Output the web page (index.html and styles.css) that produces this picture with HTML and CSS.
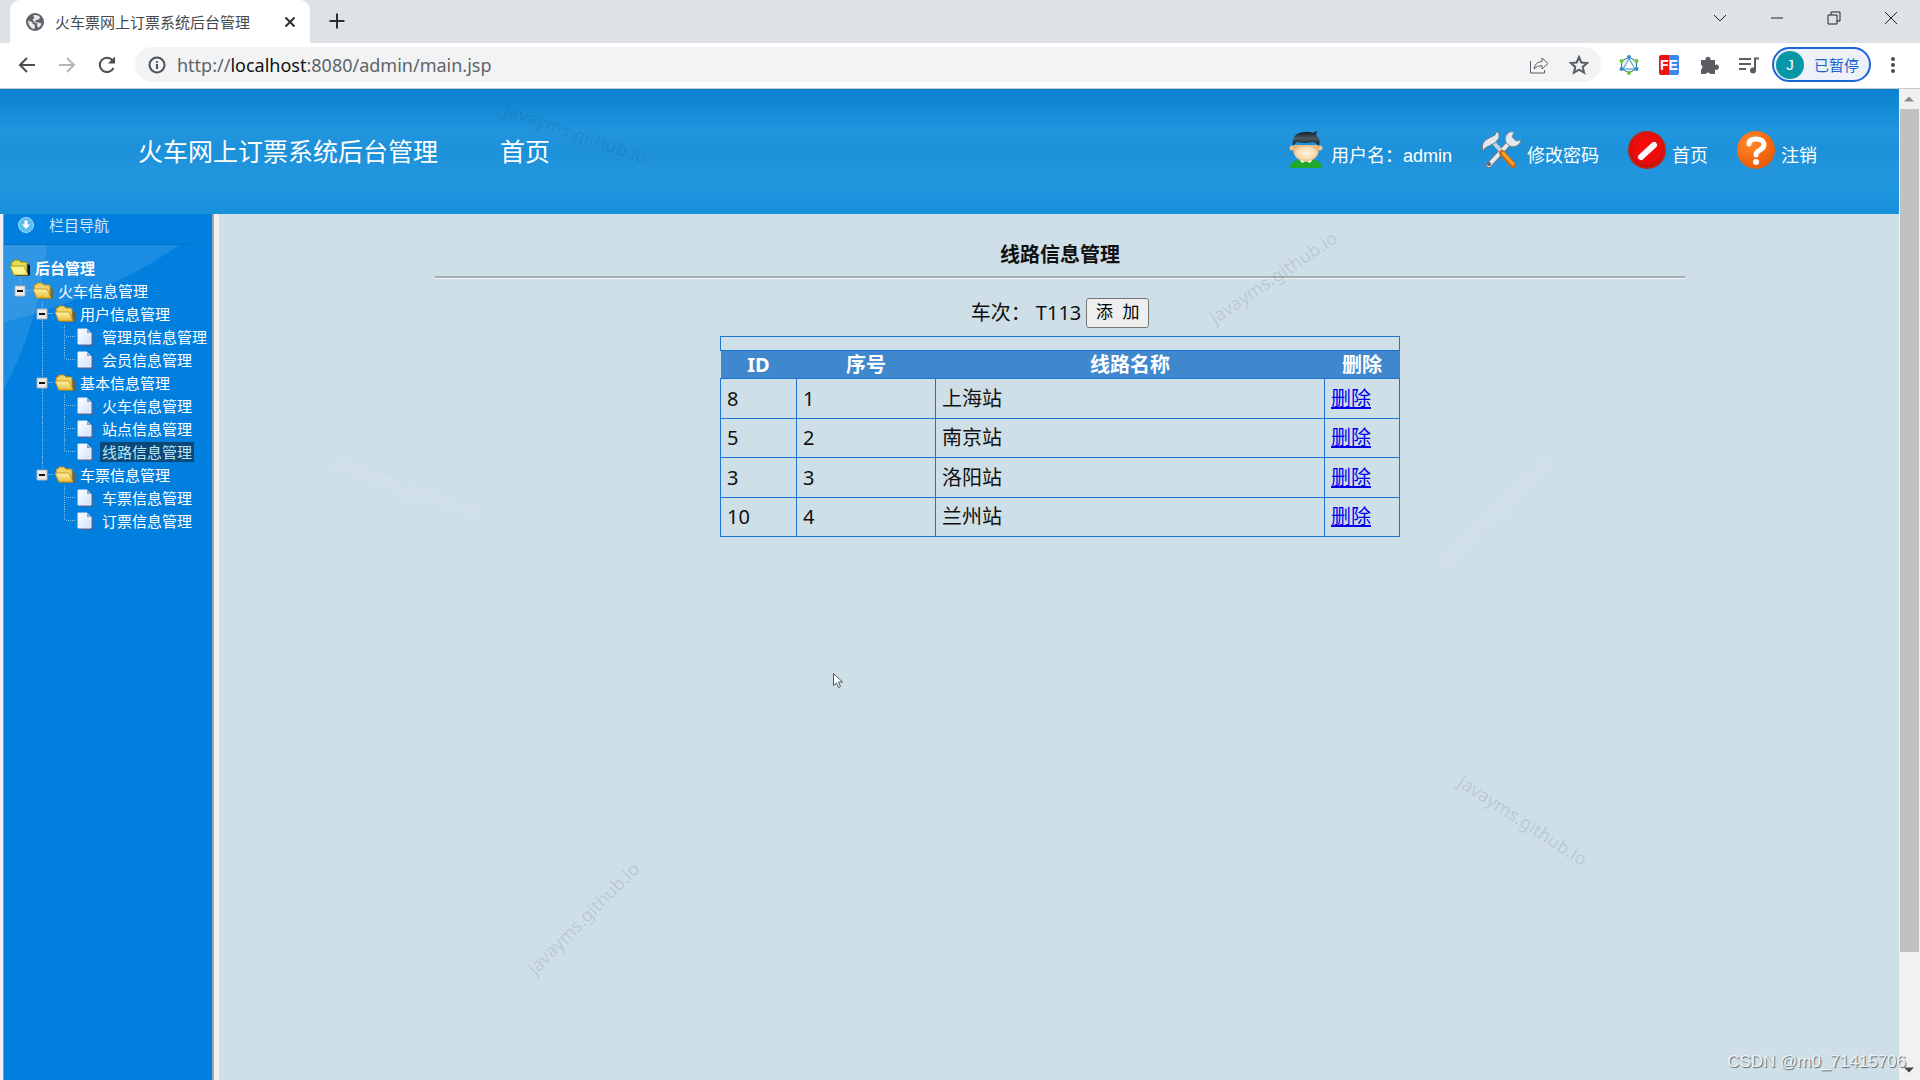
FILE: index.html
```html
<!DOCTYPE html>
<html lang="zh-CN">
<head>
<meta charset="utf-8">
<title>火车票网上订票系统后台管理</title>
<link rel="stylesheet" href="styles.css">
</head>
<body>
<svg class="defs" aria-hidden="true">
  <defs>
    <linearGradient id="gFold" x1="0" y1="0" x2="0" y2="1"><stop offset="0" stop-color="#fff6a8"/><stop offset="1" stop-color="#e9b93a"/></linearGradient>
    <linearGradient id="gDoc" x1="0" y1="0" x2="1" y2="1"><stop offset="0" stop-color="#fff"/><stop offset="1" stop-color="#cfe0ff"/></linearGradient>
    <radialGradient id="gRed" cx=".5" cy=".45" r=".6"><stop offset="0" stop-color="#ff0a0a"/><stop offset=".7" stop-color="#ea0c0c"/><stop offset="1" stop-color="#b01010"/></radialGradient>
    <radialGradient id="gOrange" cx=".35" cy=".3" r=".8"><stop offset="0" stop-color="#ff8a2e"/><stop offset=".7" stop-color="#f2640c"/><stop offset="1" stop-color="#d95a10"/></radialGradient>
    <linearGradient id="gSteel" x1="0" y1="0" x2="1" y2="0"><stop offset="0" stop-color="#fff"/><stop offset="1" stop-color="#8d9aa5"/></linearGradient>
    <linearGradient id="gHair" x1="0" y1="0" x2="0" y2="1"><stop offset="0" stop-color="#10181c"/><stop offset=".5" stop-color="#4a5a62"/><stop offset="1" stop-color="#10181c"/></linearGradient>
    <radialGradient id="gFace"><stop offset="0" stop-color="#fff1de"/><stop offset=".7" stop-color="#fbdcb4"/><stop offset="1" stop-color="#e9b67c"/></radialGradient>
    <symbol id="folder" viewBox="0 0 20 18">
      <path d="M17 6l3 1v9l-2 1H5z" fill="#8a5a10" opacity=".7"/>
      <path d="M1 4q0-1 1-1h1l1-2h5l2 2h5q1 0 1 1v11H3z" fill="#f3d468" stroke="#b98a22" stroke-width="1"/>
      <path d="M0 7h14l4 9H4z" fill="url(#gFold)" stroke="#c99a2a" stroke-width="1"/>
    </symbol>
    <symbol id="folder-root" viewBox="0 0 20 18">
      <path d="M17 5l3 1v10l-2 1H5z" fill="#111"/>
      <path d="M1 4q0-1 1-1h1l1-2h5l2 2h5q1 0 1 1v11H3z" fill="#e6dc50" stroke="#8a8420" stroke-width="1"/>
      <path d="M0 7h14l4 9H4z" fill="#f8f48c" stroke="#a8a030" stroke-width="1"/>
    </symbol>
    <symbol id="doc" viewBox="0 0 20 18">
      <path d="M3 2h9l4 4v12H3z" fill="#5a5f8a" opacity=".75"/>
      <path d="M1 1h9l4 4v11H1z" fill="url(#gDoc)" stroke="#e8eefc" stroke-width="1"/>
      <path d="M10 1l4 4h-4z" fill="#8f9cc8"/>
    </symbol>
    <symbol id="v-line" viewBox="0 0 22 23"><path class="dots" d="M11.500 0v23"/></symbol>
    <symbol id="box-root" viewBox="0 0 22 23"><path class="dots" d="M11.500 0v6M17 11.500h7"/><path d="M6 7h10v10H6z" fill="#ecebe8" stroke="#a9b3bd"/><path d="M8 12h6" stroke="#111" stroke-width="2"/></symbol>
    <symbol id="box-mid" viewBox="0 0 22 23"><path class="dots" d="M11.500 0v23M17 11.500h7"/><path d="M6 7h10v10H6z" fill="#ecebe8" stroke="#a9b3bd"/><path d="M8 12h6" stroke="#111" stroke-width="2"/></symbol>
    <symbol id="leaf-mid" viewBox="0 0 22 23"><path class="dots" d="M11.500 0v23M13 11.500h11"/></symbol>
    <symbol id="leaf-end" viewBox="0 0 22 23"><path class="dots" d="M11.500 0v12M13 11.500h11"/></symbol>
  </defs>
</svg>

<div class="tabstrip">
  <div class="tab">
    <svg class="favicon" viewBox="0 0 18 18"><circle cx="9" cy="9" r="9" fill="#5f6368"/><path d="M2 7.500l4 1.500 1 2 2 1-.5 4.200Q2.500 15 2 7.500zM7 2.500q4-1.500 7 1.500l-1 2.500-3 .5-1 2 3 .5 3.500 1q-.8 3-3 4.500l-1.500-2.500.5-2-3-1-2-3 2-1.500z" fill="#e8eaed"/></svg>
    <span class="tab-title">火车票网上订票系统后台管理</span>
    <button class="tab-close" aria-label="关闭标签页"><svg viewBox="0 0 12 12"><path d="M1.500 1.500l9 9M10.500 1.500l-9 9"/></svg></button>
  </div>
  <button class="newtab" aria-label="新标签页"><svg viewBox="0 0 16 16"><path d="M8 .5v15M.5 8h15"/></svg></button>
  <div class="winctl">
    <button aria-label="搜索标签页"><svg viewBox="0 0 16 16"><path d="M2 5l6 6 6-6"/></svg></button>
    <button aria-label="最小化"><svg viewBox="0 0 16 16"><path d="M2 8h12"/></svg></button>
    <button aria-label="还原"><svg viewBox="0 0 16 16"><path d="M2 5h9v9H2zM5 5V2h9v9h-3"/></svg></button>
    <button aria-label="关闭"><svg viewBox="0 0 16 16"><path d="M2 2l12 12M14 2L2 14"/></svg></button>
  </div>
</div>

<div class="toolbar">
  <div class="navbtns">
    <button aria-label="后退"><svg viewBox="0 0 20 20"><path d="M18 10H3M10 3l-7 7 7 7"/></svg></button>
    <button class="off" aria-label="前进"><svg viewBox="0 0 20 20"><path d="M2 10h15M10 3l7 7-7 7"/></svg></button>
    <button aria-label="刷新"><svg viewBox="0 0 20 20"><path d="M16.500 13A7.200 7.200 0 1 1 15.500 5.200"/><path d="M18 1.500v7h-7z" fill="#4a4d51" stroke="none"/></svg></button>
  </div>
  <div class="omnibox">
    <svg class="info" viewBox="0 0 18 18"><circle cx="9" cy="9" r="7.500"/><path d="M9 8v5M9 5v1.800"/></svg>
    <div class="url" role="textbox" aria-label="地址">http://<b>localhost</b>:8080/admin/main.jsp</div>
    <button aria-label="分享"><svg viewBox="0 0 20 20"><path d="M1.500 6v12h14v-3"/><path d="M5 14q1-7 8-7.500V3l6 5.500-6 5.500v-3.500q-5 0-8 3.500z"/></svg></button>
    <button class="star" aria-label="收藏"><svg viewBox="0 0 20 20"><path d="M10 2l2.300 5.500 5.900.5-4.500 3.900 1.400 5.800L10 14.600l-5.100 3.100 1.400-5.800L1.800 8l5.900-.5z"/></svg></button>
  </div>
  <div class="exts">
    <button aria-label="扩展程序 GraphQL"><svg viewBox="0 0 20 20"><path d="M10 2l7.500 4.200v7.600L10 18l-7.500-4.200V6.200z" fill="#e8f2fa" stroke="#3f6a80"/><path d="M10 4l6 10H4z" fill="#fff" stroke="#3b8fd0"/><g fill="#6ec52e" stroke="none"><circle cx="2.500" cy="6" r="2"/><circle cx="17.500" cy="6" r="2"/><circle cx="10" cy="18" r="2"/></g><g fill="#2f8fd0" stroke="none"><circle cx="10" cy="2" r="2"/><circle cx="2.500" cy="14" r="2"/><circle cx="17.500" cy="14" r="2"/></g></svg></button>
    <button class="fe" aria-label="扩展程序 FE"><span>FE</span></button>
    <button aria-label="扩展程序"><svg viewBox="0 0 20 20"><path d="M2 5h4.500a2.600 2.600 0 1 1 5 0H16v5a2.600 2.600 0 1 1 0 4.500V19h-4.700a2.500 2.500 0 0 0-4.600 0H2v-4.700a2.500 2.500 0 0 0 0-4.600z" fill="#5a5d61" stroke="none"/></svg></button>
    <button aria-label="媒体控制"><svg viewBox="0 0 20 20"><path d="M0 4h12M0 9h12M0 14h7M16 15V3.500h4" stroke-width="2"/><circle cx="14" cy="15.500" r="3" fill="#5a5d61" stroke="none"/></svg></button>
  </div>
  <button class="profile"><span class="avatar">J</span><span>已暂停</span></button>
  <button class="more" aria-label="菜单"><svg viewBox="0 0 4 18"><circle cx="2" cy="3" r="2"/><circle cx="2" cy="9" r="2"/><circle cx="2" cy="15" r="2"/></svg></button>
</div>

<div class="viewport">
  <div class="page">
    <header class="banner">
      <h1>火车网上订票系统后台管理</h1>
      <a class="home" href="#">首页</a>
      <nav class="quick">
        <span class="user"><svg viewBox="0 0 34 38"><path d="M1 37q0-7 8-8h16q8 1 8 8z" fill="#22a82c"/><path d="M10 28h14l-3 4-4-2-4 2z" fill="#fff"/><path d="M12 27h10l-5 4z" fill="#eeb983"/><circle cx="3" cy="17" r="2.500" fill="#f0c492"/><circle cx="31" cy="17" r="2.500" fill="#f0c492"/><path d="M4 14h26q1 16-13 16T4 14z" fill="url(#gFace)"/><path d="M4 15Q2 2 15 1q5-1 9 1l4-2-1 4q5 4 3 11-2-3-6-4-8 2-16 0-2 1-4 4z" fill="url(#gHair)"/></svg>用户名：admin</span>
        <a class="pwd" href="#"><svg viewBox="0 0 40 38"><path d="M8 34L28 12" stroke="#6d7780" stroke-width="6" stroke-linecap="round"/><path d="M8 34L28 12" stroke="#e6ebee" stroke-width="4" stroke-linecap="round"/><path d="M27 2q-5 5-1 11 7 6 13-1l1-3-5 1-4-4 2-5q-4-1-6 1z" fill="#e3e8ec" stroke="#7f8b95"/><path d="M12 11l10 11" stroke="#c9d1d8" stroke-width="4"/><path d="M21 22l11 12" stroke="#c96a10" stroke-width="6" stroke-linecap="round"/><path d="M22 22l10 11" stroke="#ffa02a" stroke-width="3" stroke-linecap="round"/><path d="M2 20q-3-9 6-13l6-3 1-3 3 1v5l-4 5-6 3q-4 1-6 5z" fill="#e3e8ec" stroke="#6d7780"/><circle cx="8" cy="33" r="2" fill="#5b6570"/></svg>修改密码</a>
        <a class="index" href="#"><svg viewBox="0 0 38 38"><circle cx="19" cy="19" r="19" fill="#c8200c"/><circle cx="19" cy="19" r="17" fill="url(#gRed)"/><path d="M13 26L26 14" stroke="#fff" stroke-width="6" stroke-linecap="round"/></svg>首页</a>
        <a class="logout" href="#"><svg viewBox="0 0 38 38"><circle cx="19" cy="19" r="19" fill="url(#gOrange)"/><path d="M12 13q0-5 7-5t8 5q0 4-4 6-4 2-4 5" fill="none" stroke="#fff" stroke-width="5" stroke-linecap="round"/><circle cx="19" cy="31" r="3" fill="#fff"/></svg>注销</a>
      </nav>
    </header>

    <div class="frames">
      <aside class="side">
        <h2><svg viewBox="0 0 16 16"><circle cx="8" cy="8" r="7.500" fill="#5dbcf0" stroke="#9fdcff"/><path d="M6.500 3.500h3v4h2.500l-4 4.500-4-4.500h2.500z" fill="#fff"/></svg>栏目导航</h2>
        <ul class="tree">
          <li class="root"><svg class="ico"><use href="#folder-root"/></svg><a href="#">后台管理</a></li>
          <li><svg class="ln"><use href="#box-root"/></svg><svg class="ico"><use href="#folder"/></svg><a href="#">火车信息管理</a></li>
          <li><i></i><svg class="ln"><use href="#box-mid"/></svg><svg class="ico"><use href="#folder"/></svg><a href="#">用户信息管理</a></li>
          <li><i></i><svg class="ln"><use href="#v-line"/></svg><svg class="ln"><use href="#leaf-mid"/></svg><svg class="ico"><use href="#doc"/></svg><a href="#">管理员信息管理</a></li>
          <li><i></i><svg class="ln"><use href="#v-line"/></svg><svg class="ln"><use href="#leaf-end"/></svg><svg class="ico"><use href="#doc"/></svg><a href="#">会员信息管理</a></li>
          <li><i></i><svg class="ln"><use href="#box-mid"/></svg><svg class="ico"><use href="#folder"/></svg><a href="#">基本信息管理</a></li>
          <li><i></i><svg class="ln"><use href="#v-line"/></svg><svg class="ln"><use href="#leaf-mid"/></svg><svg class="ico"><use href="#doc"/></svg><a href="#">火车信息管理</a></li>
          <li><i></i><svg class="ln"><use href="#v-line"/></svg><svg class="ln"><use href="#leaf-mid"/></svg><svg class="ico"><use href="#doc"/></svg><a href="#">站点信息管理</a></li>
          <li><i></i><svg class="ln"><use href="#v-line"/></svg><svg class="ln"><use href="#leaf-end"/></svg><svg class="ico"><use href="#doc"/></svg><a class="on" href="#">线路信息管理</a></li>
          <li><i></i><svg class="ln"><use href="#box-root"/></svg><svg class="ico"><use href="#folder"/></svg><a href="#">车票信息管理</a></li>
          <li><i></i><i></i><svg class="ln"><use href="#leaf-mid"/></svg><svg class="ico"><use href="#doc"/></svg><a href="#">车票信息管理</a></li>
          <li><i></i><i></i><svg class="ln"><use href="#leaf-end"/></svg><svg class="ico"><use href="#doc"/></svg><a href="#">订票信息管理</a></li>
        </ul>
      </aside>

      <main class="main">
        <h3>线路信息管理</h3>
        <hr>
        <form class="train"><span>车次：&nbsp;T113</span><button type="button">添&nbsp;&nbsp;加</button></form>
        <table>
          <colgroup><col class="c-id"><col class="c-no"><col class="c-name"><col class="c-del"></colgroup>
          <thead>
            <tr class="blank"><td colspan="4"></td></tr>
            <tr><th>ID</th><th>序号</th><th>线路名称</th><th>删除</th></tr>
          </thead>
          <tbody>
            <tr><td>8</td><td>1</td><td>上海站</td><td><a href="#">删除</a></td></tr>
            <tr><td>5</td><td>2</td><td>南京站</td><td><a href="#">删除</a></td></tr>
            <tr><td>3</td><td>3</td><td>洛阳站</td><td><a href="#">删除</a></td></tr>
            <tr><td>10</td><td>4</td><td>兰州站</td><td><a href="#">删除</a></td></tr>
          </tbody>
        </table>
      </main>
    </div>
  </div>

  <div class="scrollbar" aria-hidden="true">
    <svg viewBox="0 0 20 20"><path d="M5 12.500l5-5 5 5z" fill="#8b8b8b"/></svg>
    <div class="thumb"></div>
    <svg viewBox="0 0 20 20"><path d="M5 7.500l5 5 5-5z" fill="#444"/></svg>
  </div>
</div>

<div class="marks" aria-hidden="true">
  <span class="wm dark w1">javayms.github.io</span>
  <span class="wm dark w2">javayms.github.io</span>
  <span class="wm light w3">javayms.github.io</span>
  <span class="wm light w4">javayms.github.io</span>
  <span class="wm dark w5">javayms.github.io</span>
  <span class="wm dark w6">javayms.github.io</span>
  <svg class="cursor" viewBox="0 0 10 15"><path d="M.5.500v12l3-2.500 2 4.500 2-1-2-4.500h4z" fill="#fff" stroke="#4a5560"/></svg>
  <span class="csdn">CSDN @m0_71415706</span>
</div>
</body>
</html>
```
FILE: styles.css
```css
* { box-sizing: border-box; }

body {
  margin: 0;
  min-height: 100vh;
  display: flex;
  flex-direction: column;
  position: relative;
  overflow: hidden;
  font-family: "Noto Sans", "Noto Sans CJK SC", sans-serif;
  background: #fff;
}

button {
  margin: 0;
  padding: 0;
  border: 0;
  background: none;
  font: inherit;
  display: flex;
  align-items: center;
  justify-content: center;
}

svg { display: block; flex: none; }
.defs { position: absolute; width: 0; height: 0; }

/* browser tab strip */
.tabstrip {
  display: flex;
  align-items: flex-start;
  height: 43px;
  padding-left: 10px;
  background: #dee1e6;
}
.tab {
  display: flex;
  align-items: center;
  width: 300px;
  height: 43px;
  padding: 0 12px 0 16px;
  border-radius: 10px 10px 0 0;
  background: #fff;
}
.favicon { width: 18px; height: 18px; }
.tab-title {
  flex: 1;
  margin-left: 11px;
  font: 15px/20px "Noto Sans CJK SC", sans-serif;
  color: #45484c;
  white-space: nowrap;
}
.tab-close { width: 16px; height: 16px; }
.tab-close svg { width: 12px; height: 12px; }
.newtab { width: 36px; height: 42px; margin-left: 9px; }
.newtab svg { width: 16px; height: 16px; }
.tab-close path, .newtab path { fill: none; stroke: #2b2d30; stroke-width: 2; }
.winctl { display: flex; margin-left: auto; padding-right: 1px; }
.winctl button { width: 57px; height: 36px; }
.winctl svg { width: 16px; height: 16px; fill: none; stroke: #222; stroke-width: 1; }

/* browser toolbar */
.toolbar {
  display: flex;
  align-items: center;
  height: 46px;
  padding: 0 13px 2px 7px;
  border-bottom: 1px solid #c4c8cc;
  background: #fff;
}
.navbtns { display: flex; margin-right: 8px; }
.navbtns button { width: 40px; height: 36px; }
.navbtns svg { width: 20px; height: 20px; fill: none; stroke: #4a4d51; stroke-width: 2; }
.navbtns .off svg { stroke: #b4b7ba; }
.omnibox {
  flex: 1;
  display: flex;
  align-items: center;
  height: 35px;
  padding: 0 2px 0 13px;
  border-radius: 18px;
  background: #f1f3f4;
}
.info { width: 18px; height: 18px; fill: none; stroke: #4f5357; stroke-width: 2; }
.url { flex: 1; margin-left: 11px; font: 18px/24px "Noto Sans", sans-serif; color: #5f6368; }
.url b { font-weight: 400; color: #111; }
.omnibox button, .exts button { width: 40px; height: 34px; }
.omnibox button svg, .exts svg { width: 20px; height: 20px; fill: none; stroke: #5a5d61; stroke-width: 1; }
.omnibox .star svg { stroke-width: 2; }
.exts { display: flex; margin-left: 8px; }
.fe span {
  width: 20px;
  border-radius: 2px;
  background: linear-gradient(90deg, #ee1111 50%, #3f86f5 50%);
  color: #fff;
  font: bold 14px/20px "Liberation Sans", sans-serif;
  text-align: center;
}
.profile {
  justify-content: flex-start;
  gap: 10px;
  width: 99px;
  height: 35px;
  padding-left: 2px;
  margin-left: 3px;
  border: 2px solid #1a66d8;
  border-radius: 18px;
  background: #edf1f9;
  color: #1a62d0;
  font: 15px/20px "Noto Sans CJK SC", sans-serif;
}
.avatar {
  width: 28px;
  border-radius: 50%;
  background: #0797a6;
  color: #fff;
  font: 15px/28px "Liberation Sans", sans-serif;
  text-align: center;
}
.more { width: 28px; height: 34px; margin-left: 8px; }
.more svg { width: 4px; height: 18px; fill: #4a4d51; }

/* page viewport */
.viewport { flex: 1; display: flex; }
.page { flex: 1; display: flex; flex-direction: column; }

.banner {
  display: flex;
  align-items: center;
  height: 125px;
  padding: 0 82px 4px 138px;
  background: linear-gradient(#0a82cf 0, #1a8fda 30px, #2196de 42px, #1c90d8 62px, #2297df 84px, #2096de 100px, #178fda 100%);
  color: #fff;
}
.banner a { color: inherit; text-decoration: none; }
.banner h1, .home { margin: 0; font: 25px/36px "Noto Sans CJK SC", sans-serif; }
.home { margin-left: 62px; }
.quick { display: flex; gap: 29px; margin-left: auto; font: 18px/26px "Liberation Sans", "Noto Sans CJK SC", sans-serif; }
.quick > * { display: flex; align-items: flex-end; }
.quick svg { width: 38px; height: 38px; margin-right: 6px; }
.quick .user svg { width: 34px; margin-right: 8px; }
.quick .pwd svg { width: 40px; }

.frames { flex: 1; display: flex; }
.side {
  flex: none;
  width: 219px;
  border: solid #f1eff0;
  border-width: 0 5px 0 3px;
  box-shadow: inset 1px 0 #8a98a6, inset -2px 0 #9aa6b4;
  background: #007fdf url("data:image/svg+xml,%3Csvg xmlns='http://www.w3.org/2000/svg' width='180' height='180'%3E%3Cg fill='%23fff' fill-opacity='.1'%3E%3Cpath d='M1 30H178Q100 84 1 108z'/%3E%3Cpath d='M1 30H44Q36 110 1 175z'/%3E%3C/g%3E%3C/svg%3E") no-repeat;
}
.side h2 {
  display: flex;
  align-items: center;
  gap: 15px;
  height: 31px;
  margin: 0 2px 0 1px;
  padding: 0 0 10px 14px;
  background: linear-gradient(90deg, #0a6cc0, #0a6cc0 80%, #007fdf) bottom / 100% 1px no-repeat;
  color: #c9e8ff;
  font: 15px/20px "Noto Sans CJK SC", sans-serif;
}
.side h2 svg { width: 16px; height: 16px; }
.tree { margin: 0; padding: 11px 0 0 6px; list-style: none; }
.tree li { display: flex; align-items: center; height: 23px; }
.tree i { width: 22px; }
.ln { width: 22px; height: 23px; overflow: visible; }
.dots { fill: none; stroke: #7fc4ee; stroke-width: 1; stroke-dasharray: 1 1; }
.ico { width: 20px; height: 18px; margin: 0 3px 0 2px; }
.root .ico { margin-left: 1px; }
.tree a {
  padding: 0 2px;
  color: #fff;
  font: 15px/20px "Noto Sans CJK SC", sans-serif;
  text-decoration: none;
  white-space: nowrap;
}
.tree .root a { font-weight: 700; }
.tree a.on { background: #0b4878; color: #b9e6f5; }

.main {
  flex: 1;
  padding: 25px 6px 25px 8px;
  background: #cfdfe7;
  color: #111;
  font-size: 20px;
  line-height: 28px;
}
.main h3 { margin: 0; font: bold 20px/30px "Noto Sans CJK SC", sans-serif; text-align: center; }
.main hr { width: 75%; height: 3px; margin: 7px auto 19px; border: 0; border-top: 2px solid #a7adb1; border-bottom: 1px solid #f2f6f8; }
.train { display: flex; justify-content: center; align-items: center; gap: 5px; margin-bottom: 8px; }
.train button {
  width: 63px;
  height: 30px;
  border: 1px solid #767676;
  border-radius: 3px;
  background: #efefef;
  color: #000;
  font: 17px/24px "Liberation Sans", "Noto Sans CJK SC", sans-serif;
}
table {
  width: 680px;
  height: 201px;
  margin: 0 auto;
  border-collapse: collapse;
  table-layout: fixed;
}
.c-id { width: 76px; }
.c-no { width: 139px; }
.c-del { width: 75px; }
td { padding: 1px 6px 0; border: 1px solid #1d74d3; }
.blank td { height: 14px; }
th { height: 28px; padding: 0; background: #3f88cd; color: #fff; line-height: 26px; }
tbody td { height: 39px; }
td a { color: #0000ee; }

/* native-looking scroll track */
.scrollbar { display: flex; flex-direction: column; width: 21px; background: #f1f1f1; }
.scrollbar svg { width: 20px; height: 20px; }
.thumb { height: calc(85% + 1px); margin: 0 1px auto; background: #c1c1c1; }

/* overlay marks */
.marks { position: absolute; inset: 0; overflow: hidden; pointer-events: none; }
.wm { position: absolute; font: 18px/24px "Noto Sans", sans-serif; translate: -50% -50%; }
.dark { color: rgba(40, 60, 75, .14); }
.light { color: rgba(255, 255, 255, .12); }
.w1 { left: 576px; top: 133px; rotate: 19deg; }
.w2 { left: 1273px; top: 277px; rotate: -34deg; }
.w3 { left: 407px; top: 486px; rotate: 19deg; }
.w4 { left: 1493px; top: 511px; rotate: -44deg; }
.w5 { left: 583px; top: 918px; rotate: -45deg; }
.w6 { left: 1523px; top: 820px; rotate: 33deg; }
.cursor { position: absolute; left: 833px; top: 673px; width: 10px; height: 15px; }
.csdn {
  position: absolute;
  right: 14px;
  bottom: 8px;
  color: #eef3f5;
  font: 17px/20px "Liberation Sans", sans-serif;
  text-shadow: 1px 1px 1px #5a646b;
}
```
